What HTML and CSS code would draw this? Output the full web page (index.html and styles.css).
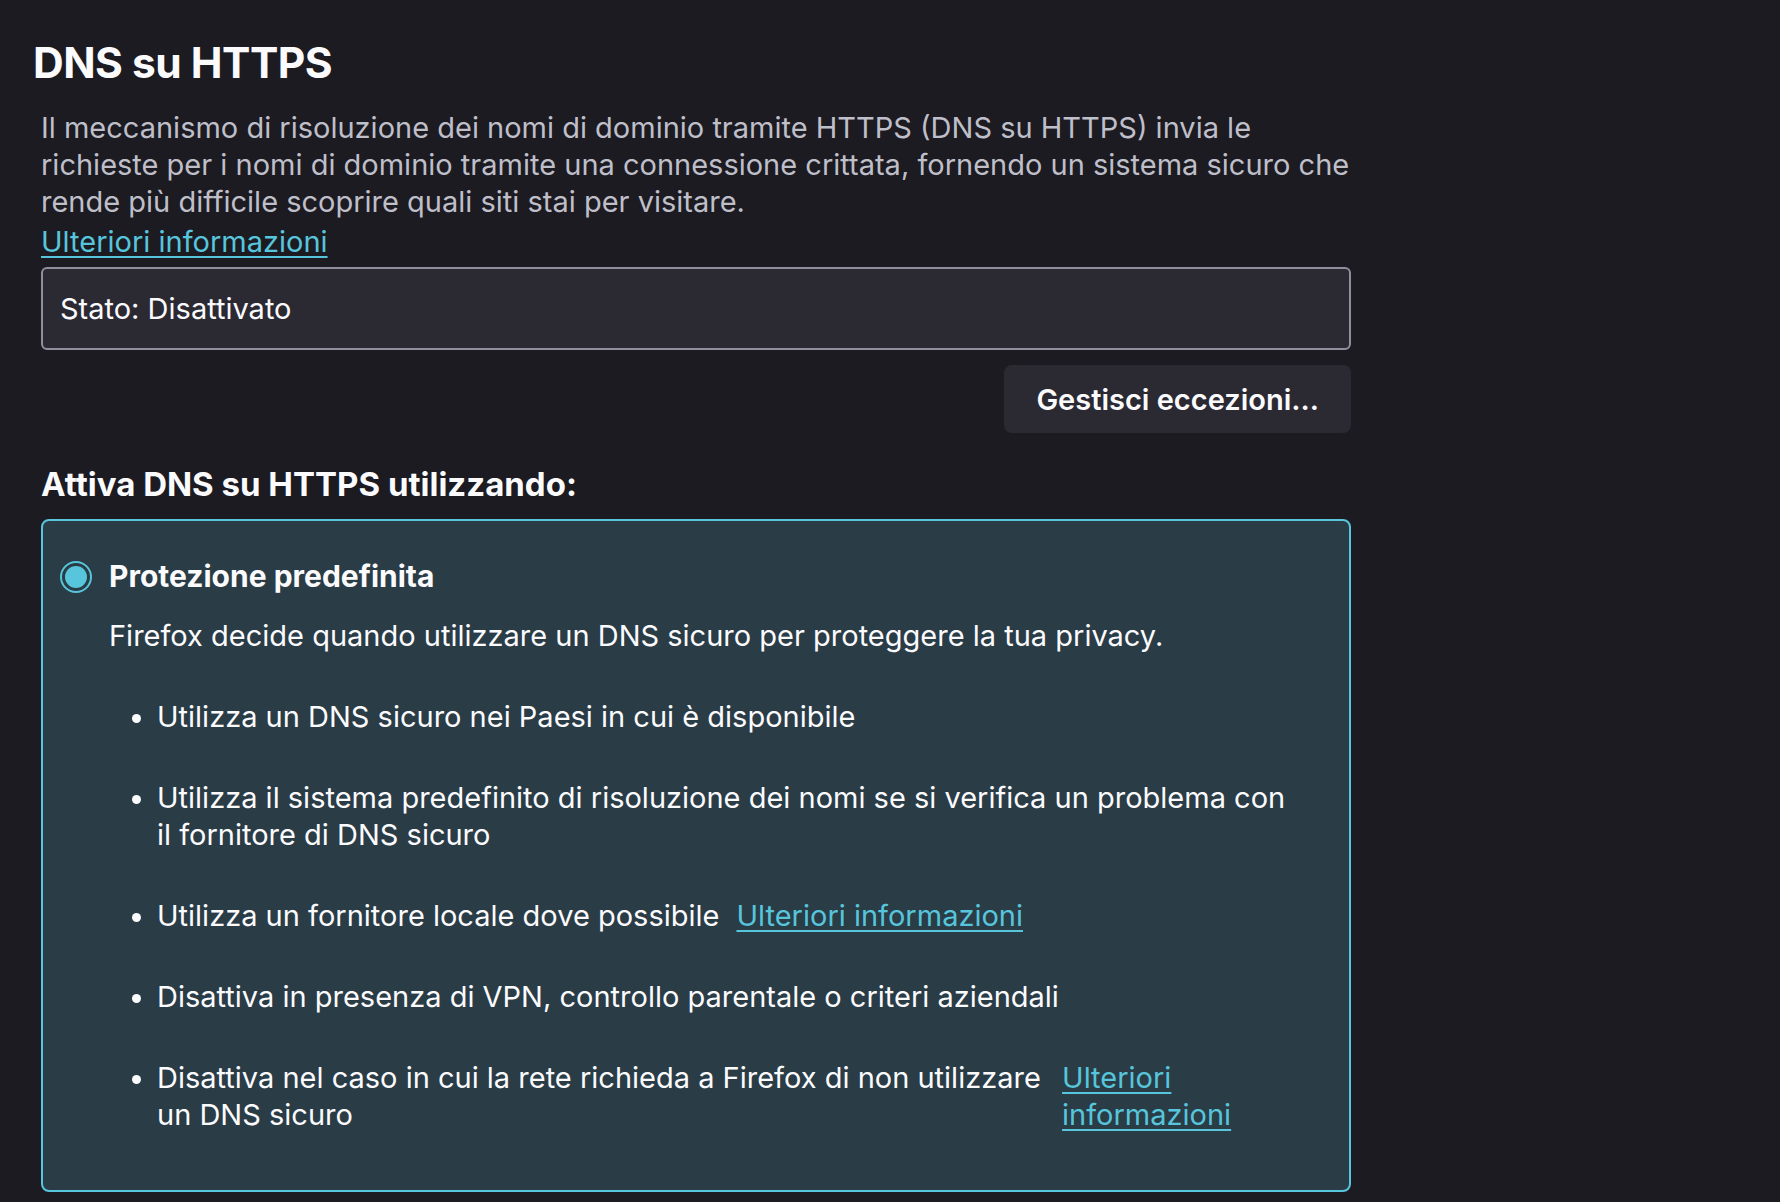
FILE: index.html
```html
<!DOCTYPE html>
<html lang="it">
<head>
<meta charset="utf-8">
<title>DNS su HTTPS</title>
<link rel="stylesheet" href="styles.css">
</head>
<body>
<div class="page">
  <h1 class="title">DNS su HTTPS</h1>
  <div class="section">
    <p class="desc">Il meccanismo di risoluzione dei nomi di dominio tramite HTTPS (DNS su HTTPS) invia le richieste per i nomi di dominio tramite una connessione crittata, fornendo un sistema sicuro che rende più difficile scoprire quali siti stai per visitare.</p>
    <a class="link block-link" href="#">Ulteriori informazioni</a>
    <div class="status">Stato: Disattivato</div>
    <div class="actions">
      <button class="btn">Gestisci eccezioni…</button>
    </div>
    <h2 class="subtitle">Attiva DNS su HTTPS utilizzando:</h2>
    <div class="option selected">
      <label class="option-head">
        <span class="radio"><span class="radio-dot"></span></span>
        <span class="option-label">Protezione predefinita</span>
      </label>
      <p class="option-desc">Firefox decide quando utilizzare un DNS sicuro per proteggere la tua privacy.</p>
      <ul class="features">
        <li>Utilizza un DNS sicuro nei Paesi in cui è disponibile</li>
        <li>Utilizza il sistema predefinito di risoluzione dei nomi se si verifica un problema con il fornitore di DNS sicuro</li>
        <li><div class="feature-row"><span>Utilizza un fornitore locale dove possibile</span><a class="link" href="#">Ulteriori informazioni</a></div></li>
        <li>Disattiva in presenza di VPN, controllo parentale o criteri aziendali</li>
        <li><div class="feature-row"><span>Disattiva nel caso in cui la rete richieda a Firefox di non utilizzare un DNS sicuro</span><a class="link" href="#">Ulteriori informazioni</a></div></li>
      </ul>
    </div>
  </div>
</div>
</body>
</html>
```

FILE: styles.css
```css
html, body {
  margin: 0;
  padding: 0;
  background: #1c1b22;
}

body {
  font-family: Inter, "Noto Sans", sans-serif;
  font-size: 29px;
  line-height: 37px;
  color: #fbfbfe;
}

.page {
  padding: 36px 0 0 33px;
  width: 1318px;
}

.title {
  margin: 0;
  font-size: 42.5px;
  line-height: 53px;
  font-weight: 700;
  letter-spacing: -0.5px;
}

.section {
  padding-left: 8px;
  width: 1310px;
}

.desc {
  margin: 20px 0 0;
  color: #bfbfc9;
}

.link {
  color: #57c5db;
  text-decoration: underline;
  text-underline-offset: 4px;
  text-decoration-thickness: 2px;
}

.block-link {
  display: inline-block;
  margin-top: 3px;
}

.status {
  margin-top: 7px;
  box-sizing: border-box;
  height: 83px;
  border: 2px solid #8f8f9d;
  border-radius: 6px;
  background: #2b2a33;
  padding: 21px 17px;
}

.actions {
  display: flex;
  justify-content: flex-end;
  margin-top: 15px;
}

.btn {
  font-family: inherit;
  font-size: 29px;
  font-weight: 600;
  color: #fbfbfe;
  background: #2b2a33;
  border: none;
  border-radius: 8px;
  height: 68px;
  padding: 0 32px;
}

.subtitle {
  margin: 33px 0 0;
  font-size: 33px;
  line-height: 37px;
  font-weight: 700;
}

.option {
  margin-top: 16px;
  border: 2px solid #57c5db;
  border-radius: 8px;
  background: #2a3c46;
  padding: 37px 53px 13px 17px;
}

.option-head {
  display: flex;
  align-items: center;
  gap: 17px;
}

.radio {
  box-sizing: border-box;
  width: 32px;
  height: 32px;
  border: 2px solid #57c5db;
  border-radius: 50%;
  display: flex;
  align-items: center;
  justify-content: center;
}

.radio-dot {
  width: 22px;
  height: 22px;
  border-radius: 50%;
  background: #57c5db;
}

.option-label {
  font-size: 30px;
  font-weight: 700;
}

.option-desc {
  margin: 22px 0 0 49px;
}

.features {
  margin: 44px 0 0 49px;
  padding: 0 0 0 48px;
  list-style: disc;
}

.features li {
  margin-bottom: 44px;
}

.feature-row {
  display: flex;
  gap: 17px;
}
```
